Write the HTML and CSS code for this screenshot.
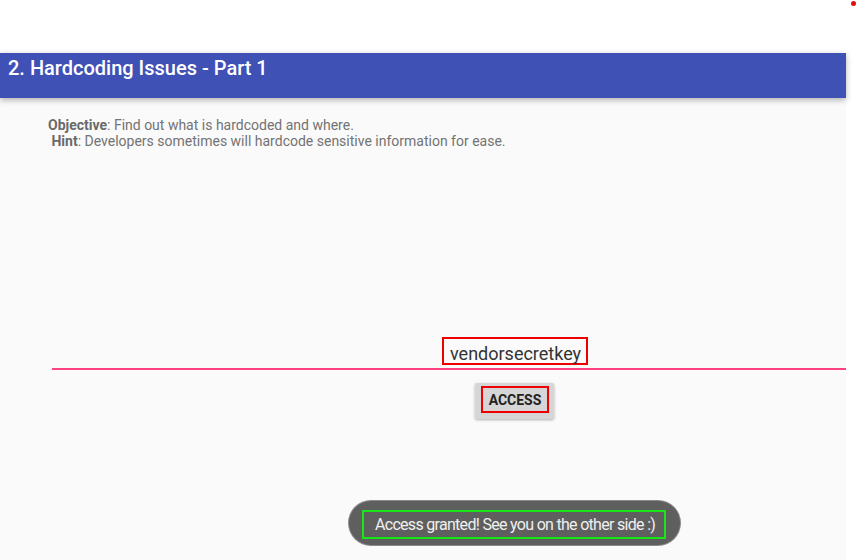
FILE: index.html
```html
<!DOCTYPE html>
<html>
<head>
<meta charset="utf-8">
<link rel="stylesheet" href="styles.css">
</head>
<body>
<span class="dot"></span>
<div class="status"></div>
<div class="app">
  <header class="appbar"><h1 class="title">2. Hardcoding Issues - Part 1</h1></header>
  <main class="content">
    <p class="desc"><b>Objective</b>: Find out what is hardcoded and where.<br>&nbsp;<b>Hint</b>: Developers sometimes will hardcode sensitive information for ease.</p>
    <div class="field"><span class="value">vendorsecretkey</span></div>
    <div class="btnrow"><button class="btn"><span class="btnlabel">ACCESS</span></button></div>
  </main>
  <div class="toast"><span class="toastmsg">Access granted! See you on the other side :)</span></div>
</div>
</body>
</html>
```
FILE: styles.css
```css
html, body { margin: 0; padding: 0; }
body {
  width: 857px;
  height: 560px;
  overflow: hidden;
  background: #ffffff;
  font-family: Roboto, "Liberation Sans", sans-serif;
  position: relative;
}
.dot {
  position: absolute;
  left: 851px;
  top: 1px;
  width: 5px;
  height: 5px;
  border-radius: 50%;
  background: #e01010;
}
.status { height: 53px; }
.app {
  position: relative;
  width: 846px;
  height: 507px;
  background: #fafafa;
}
.appbar {
  height: 45px;
  background: #3f51b5;
  box-shadow: 0 2px 6px rgba(0,0,0,0.3);
  padding-left: 8px;
  box-sizing: border-box;
}
.title {
  margin: 0;
  padding-top: 3px;
  color: #ffffff;
  font-size: 20px;
  font-weight: 500;
  line-height: 24px;
}
.content { padding-top: 19px; }
.desc {
  margin: 0 0 0 48px;
  color: #737373;
  font-size: 14px;
  line-height: 16px;
}
.desc b { color: #6a6a6a; font-weight: 700; }
.field {
  margin: 188px 0 0 52px;
  height: 33px;
  border-bottom: 2px solid #ff4081;
  box-sizing: border-box;
  display: flex;
  align-items: flex-start;
}
.value {
  margin-left: 390px;
  height: 28px;
  width: 146px;
  border: 2px solid #ee0000;
  box-sizing: border-box;
  color: #333333;
  font-size: 18px;
  line-height: 26px;
  padding-left: 6px;
  padding-top: 2px;
}
.btnrow { padding: 13px 0 0 475px; }
.btn {
  width: 79px;
  height: 36px;
  border: none;
  border-radius: 2px;
  background: #d6d6d6;
  box-shadow: 0 1px 3px rgba(0,0,0,0.3);
  padding: 3px 0 0 6px;
  box-sizing: border-box;
  display: flex;
  align-items: flex-start;
  font-family: inherit;
}
.btnlabel {
  width: 68px;
  height: 27px;
  border: 2px solid #ee0000;
  box-sizing: border-box;
  color: #222222;
  font-size: 14px;
  font-weight: 700;
  line-height: 24px;
  text-align: center;
}
.toast {
  position: absolute;
  left: 349px;
  top: 448px;
  width: 331px;
  height: 44px;
  border-radius: 22px;
  background: #5f5f5f;
  box-shadow: 0 0 0 1px #8a8a8a;
  padding: 9px 0 0 13px;
  box-sizing: border-box;
}
.toastmsg {
  display: block;
  width: 304px;
  height: 29px;
  border: 2px solid #19e619;
  box-sizing: border-box;
  color: #f0f0f0;
  font-size: 16px;
  line-height: 25px;
  padding-left: 11px;
  letter-spacing: -0.7px;
  white-space: nowrap;
}
```
